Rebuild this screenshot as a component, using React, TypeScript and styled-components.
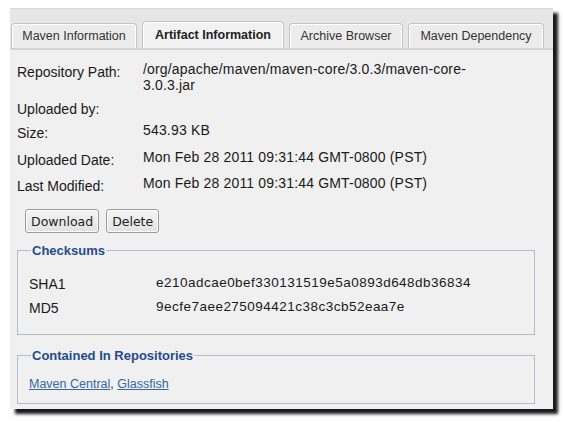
import React from "react";
import styled, { createGlobalStyle } from "styled-components";

const Global = createGlobalStyle`
  html, body { margin: 0; padding: 0; background: #ffffff; }
  body { font-family: "Liberation Sans", Arial, sans-serif; }
`;

const Page = styled.div`
  padding: 8px 0 0 10px;
  width: 563px;
  height: 422px;
  box-sizing: border-box;
`;

const Window = styled.div`
  width: 543px;
  height: 401px;
  background: #f0f0f0;
  box-shadow: 5px 5px 3px rgba(0, 0, 0, 0.9);
  display: flex;
  flex-direction: column;
`;

const TabBar = styled.div`
  height: 42px;
  background: #e6e6e6;
  border-top: 1px solid #d8d8d8;
  border-bottom: 2px solid #d4d4d4;
  display: flex;
  align-items: flex-end;
  gap: 5px;
  padding-left: 1px;
  box-sizing: border-box;
`;

const Tab = styled.div<{ $active?: boolean; $w: number }>`
  width: ${(p) => p.$w}px;
  height: ${(p) => (p.$active ? 27 : 25)}px;
  box-sizing: border-box;
  display: flex;
  align-items: center;
  justify-content: center;
  font-size: 12.5px;
  color: ${(p) => (p.$active ? "#222" : "#333")};
  font-weight: ${(p) => (p.$active ? "bold" : "normal")};
  background: ${(p) => (p.$active ? "#f2f2f2" : "#ececec")};
  border: 1px solid #c4c4c4;
  border-bottom: none;
  border-radius: 4px 4px 0 0;
  box-shadow: inset 1px 1px 0 #ffffff, inset -1px 0 0 #ffffff;
  white-space: nowrap;
`;

const Content = styled.div`
  padding: 10px 18px 0 7px;
  display: flex;
  flex-direction: column;
`;

const InfoGrid = styled.div`
  display: grid;
  grid-template-columns: 126px 1fr;
`;

const Label = styled.div<{ $h: number }>`
  height: ${(p) => p.$h}px;
  font-size: 14px;
  color: #1a1a1a;
  padding-top: 4px;
  box-sizing: border-box;
`;

const Value = styled.div<{ $h: number }>`
  height: ${(p) => p.$h}px;
  font-size: 14px;
  line-height: 16px;
  color: #1a1a1a;
  letter-spacing: 0.17px;
  padding-top: 1px;
  box-sizing: border-box;
  width: 330px;
`;

const Buttons = styled.div`
  display: flex;
  gap: 7px;
  padding: 9px 0 0 8px;
`;

const Button = styled.button`
  height: 24px;
  padding: 0 5px;
  font-family: "DejaVu Sans", sans-serif;
  font-size: 12.5px;
  color: #222;
  background: linear-gradient(#f4f4f4, #e2e2e2);
  border: 1px solid #9a9a9a;
  border-radius: 3px;
  box-shadow: inset 0 0 0 1px #ffffff;
`;

const Spacer = styled.div<{ $h: number }>`
  height: ${(p) => p.$h}px;
  flex: none;
`;

const Group = styled.fieldset<{ $h: number }>`
  margin: 0;
  height: ${(p) => p.$h}px;
  box-sizing: border-box;
  border: 1px solid #b7bbd0;
  padding: 0 0 0 11px;
  min-width: 0;
`;

const Legend = styled.legend`
  font-weight: bold;
  font-size: 13px;
  color: #244c8c;
  padding: 0 1px;
  margin-left: 2px;
`;

const CheckRow = styled.div`
  display: grid;
  grid-template-columns: 127px 1fr;
  height: 24px;
  align-items: center;
  font-size: 14px;
  color: #1a1a1a;
`;

const Hash = styled.span`
  letter-spacing: 0.48px;
  font-size: 13.5px;
  margin-top: -4px;
`;

const Links = styled.div`
  font-size: 12.5px;
  color: #333;
  padding-top: 14px;
`;

const Link = styled.a`
  color: #3567a5;
  text-decoration: underline;
`;

export default function App() {
  return (
    <>
      <Global />
      <Page>
        <Window>
          <TabBar>
            <Tab $w={126}>Maven Information</Tab>
            <Tab $w={142} $active>Artifact Information</Tab>
            <Tab $w={114}>Archive Browser</Tab>
            <Tab $w={136}>Maven Dependency</Tab>
          </TabBar>
          <Content>
            <InfoGrid>
              <Label $h={37}>Repository Path:</Label>
              <Value $h={37}>/org/apache/maven/maven-core/3.0.3/maven-core-3.0.3.jar</Value>
              <Label $h={24}>Uploaded by:</Label>
              <Value $h={24}></Value>
              <Label $h={27}>Size:</Label>
              <Value $h={27}>543.93 KB</Value>
              <Label $h={26}>Uploaded Date:</Label>
              <Value $h={26}>Mon Feb 28 2011 09:31:44 GMT-0800 (PST)</Value>
              <Label $h={26}>Last Modified:</Label>
              <Value $h={26}>Mon Feb 28 2011 09:31:44 GMT-0800 (PST)</Value>
            </InfoGrid>
            <Buttons>
              <Button>Download</Button>
              <Button>Delete</Button>
            </Buttons>
            <Spacer $h={10} />
            <Group $h={92}>
              <Legend>Checksums</Legend>
              <Spacer $h={14} />
              <CheckRow>
                <span>SHA1</span>
                <Hash>e210adcae0bef330131519e5a0893d648db36834</Hash>
              </CheckRow>
              <CheckRow>
                <span>MD5</span>
                <Hash>9ecfe7aee275094421c38c3cb52eaa7e</Hash>
              </CheckRow>
            </Group>
            <Spacer $h={13} />
            <Group $h={56}>
              <Legend>Contained In Repositories</Legend>
              <Links>
                <Link href="#">Maven Central</Link>, <Link href="#">Glassfish</Link>
              </Links>
            </Group>
          </Content>
        </Window>
      </Page>
    </>
  );
}
